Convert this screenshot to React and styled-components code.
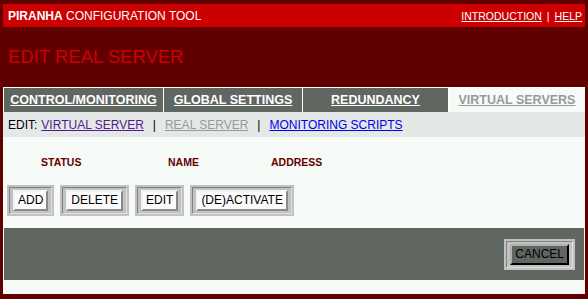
import React from 'react';
import styled, { createGlobalStyle } from 'styled-components';

const GlobalStyle = createGlobalStyle`
  html, body {
    margin: 0;
    padding: 0;
    background-color: #600000;
  }
  body {
    font-family: "Liberation Sans", Arial, sans-serif;
  }
`;

const Page = styled.div`
  width: 588px;
  height: 299px;
  padding: 4px 3px 0 3px;
  box-sizing: border-box;
  background-color: #600000;
  overflow: hidden;
`;

const TopBar = styled.div`
  height: 23px;
  background-color: #cc0000;
  display: flex;
  justify-content: space-between;
  align-items: center;
  padding: 0 3px 0 5px;
  color: white;
`;

const Brand = styled.div`
  font-size: 12px;
  b {
    font-weight: bold;
  }
`;

const TopLinks = styled.div`
  font-size: 10.5px;
  display: flex;
  gap: 5px;
  a {
    color: white;
    text-decoration: underline;
  }
`;

const Title = styled.h1`
  margin: 0;
  height: 60px;
  display: flex;
  align-items: center;
  padding: 0 0 0 5px;
  font-size: 18.5px;
  font-weight: normal;
  color: #cc0000;
`;

const Panel = styled.div`
  background-color: #f6fbf8;
  height: 207px;
  padding-bottom: 14px;
  box-sizing: border-box;
`;

const Tabs = styled.div`
  display: grid;
  grid-template-columns: 159px 138px 145px 1fr;
  gap: 1px;
  padding: 1px 0 0 1px;
  background-color: #ffffff;
`;

const Tab = styled.div`
  height: 24px;
  display: flex;
  align-items: center;
  justify-content: center;
  background-color: ${p => (p.$active ? '#f6fbf8' : '#606660')};
  font-size: 12.5px;
  font-weight: bold;
  a {
    color: ${p => (p.$active ? '#999999' : '#ffffff')};
    text-decoration: underline;
  }
`;

const SubNav = styled.div`
  height: 25px;
  background-color: #e4e8e6;
  display: flex;
  align-items: center;
  padding-left: 5px;
  font-size: 12px;
  color: black;
  gap: 4px;
`;

const NavLink = styled.a`
  color: ${p => p.$color};
  text-decoration: underline;
`;

const Sep = styled.span`
  margin: 0 5px;
`;

const Content = styled.div`
  padding: 18px 0 12px 4px;
`;

const HeaderRow = styled.div`
  display: grid;
  grid-template-columns: 127px 103px auto;
  padding-left: 34px;
  line-height: 14px;
  margin-bottom: 16px;
  font-size: 10.5px;
  font-weight: bold;
  color: #660000;
`;

const ButtonRow = styled.div`
  display: flex;
  gap: 6px;
`;

const Frame = styled.div`
  background-color: #c2c2c2;
  padding: 2px;
`;

const FrameInner = styled.div`
  border: 1px solid;
  border-color: #808080 #e0e0e0 #e0e0e0 #808080;
  padding: 2px 3px;
`;

const Button = styled.button`
  display: block;
  font-family: "Liberation Sans", Arial, sans-serif;
  font-size: 12px;
  line-height: 17px;
  padding: 0 3px;
  margin: 0;
  border: 2px solid;
  border-color: ${p => (p.$dark ? '#b0b0b0 #000 #000 #b0b0b0' : '#f4f4f4 #8a8a8a #8a8a8a #f4f4f4')};
  background-color: ${p => (p.$dark ? '#606660' : '#fbfbfb')};
  color: black;
  border-radius: 0;
`;

const ActionBar = styled.div`
  margin: 0 1px;
  height: 52px;
  background-color: #606660;
  display: flex;
  justify-content: flex-end;
  align-items: center;
  padding-right: 9px;
`;

function FramedButton({ label, dark }) {
  return (
    <Frame>
      <FrameInner>
        <Button $dark={dark}>{label}</Button>
      </FrameInner>
    </Frame>
  );
}

export default function App() {
  return (
    <Page>
      <GlobalStyle />
      <TopBar>
        <Brand>
          <b>PIRANHA</b> CONFIGURATION TOOL
        </Brand>
        <TopLinks>
          <a href="#">INTRODUCTION</a>
          <span>|</span>
          <a href="#">HELP</a>
        </TopLinks>
      </TopBar>
      <Title>EDIT REAL SERVER</Title>
      <Panel>
        <Tabs>
          <Tab><a href="#">CONTROL/MONITORING</a></Tab>
          <Tab><a href="#">GLOBAL SETTINGS</a></Tab>
          <Tab><a href="#">REDUNDANCY</a></Tab>
          <Tab $active><a href="#">VIRTUAL SERVERS</a></Tab>
        </Tabs>
        <SubNav>
          <span>EDIT:</span>
          <NavLink href="#" $color="#551a8b">VIRTUAL SERVER</NavLink>
          <Sep>|</Sep>
          <NavLink href="#" $color="#999999">REAL SERVER</NavLink>
          <Sep>|</Sep>
          <NavLink href="#" $color="#0000ee">MONITORING SCRIPTS</NavLink>
        </SubNav>
        <Content>
          <HeaderRow>
            <span>STATUS</span>
            <span>NAME</span>
            <span>ADDRESS</span>
          </HeaderRow>
          <ButtonRow>
            <FramedButton label="ADD" />
            <FramedButton label="DELETE" />
            <FramedButton label="EDIT" />
            <FramedButton label="(DE)ACTIVATE" />
          </ButtonRow>
        </Content>
        <ActionBar>
          <FramedButton label="CANCEL" dark />
        </ActionBar>
      </Panel>
    </Page>
  );
}
